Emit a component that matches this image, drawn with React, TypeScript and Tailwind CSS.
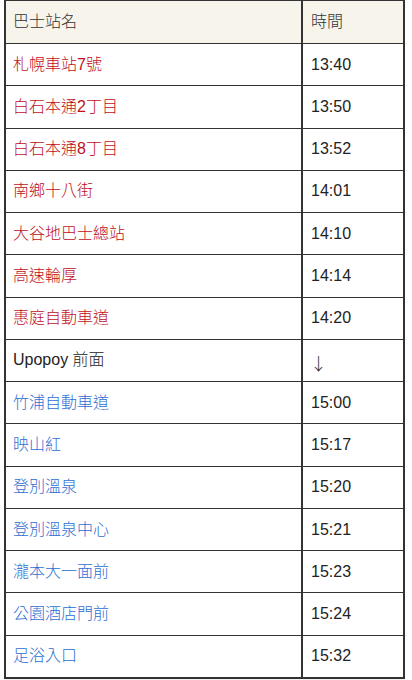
import React from "react";

type Row = { name: string; time: string; color: "red" | "black" | "blue" };

const rows: Row[] = [
  { name: "札幌車站7號", time: "13:40", color: "red" },
  { name: "白石本通2丁目", time: "13:50", color: "red" },
  { name: "白石本通8丁目", time: "13:52", color: "red" },
  { name: "南鄉十八街", time: "14:01", color: "red" },
  { name: "大谷地巴士總站", time: "14:10", color: "red" },
  { name: "高速輪厚", time: "14:14", color: "red" },
  { name: "惠庭自動車道", time: "14:20", color: "red" },
  { name: "Upopoy 前面", time: "↓", color: "black" },
  { name: "竹浦自動車道", time: "15:00", color: "blue" },
  { name: "映山紅", time: "15:17", color: "blue" },
  { name: "登別溫泉", time: "15:20", color: "blue" },
  { name: "登別溫泉中心", time: "15:21", color: "blue" },
  { name: "瀧本大一面前", time: "15:23", color: "blue" },
  { name: "公園酒店門前", time: "15:24", color: "blue" },
  { name: "足浴入口", time: "15:32", color: "blue" },
];

const font = {
  fontFamily: '"Liberation Sans", "Noto Sans CJK TC", sans-serif',
};

export default function App() {
  return (
    <div className="w-[412px] h-[680px] bg-white overflow-hidden" style={font}>
      <div className="ml-[4px] w-[401px] border-t border-l-2 border-r-2 border-b-2 border-[#333333]">
        <div className="flex h-[43px] border-b border-[#333333] bg-[#f7f4ec] text-[16px] text-[#333333]">
          <div className="w-[297px] flex items-center pl-[7px] pb-[1px] border-r-2 border-[#333333] font-light">
            巴士站名
          </div>
          <div className="flex-1 flex items-center pl-[8px] pb-[1px] font-light">時間</div>
        </div>
        {rows.map((r, i) => {
          const last = i === rows.length - 1;
          const c =
            r.color === "red"
              ? "text-[#c00f1a] font-light"
              : r.color === "blue"
              ? "text-[#2d6dd2] font-light"
              : "text-[#222222] font-light";
          return (
            <div
              key={i}
              className={
                last
                  ? "flex h-[41.3px] text-[16px]"
                  : "flex h-[42.27px] border-b border-[#333333] text-[16px]"
              }
            >
              <div
                className={
                  "w-[297px] flex items-center pl-[7px] border-r-2 border-[#333333] " + c
                }
              >
                {r.name}
              </div>
              {r.time === "↓" ? (
                <div className="flex-1 flex items-center pl-[7px] pt-[5px] text-[#333333]">
                  <span className="font-['Noto_Sans_CJK_TC'] text-[17px] font-light">↓</span>
                </div>
              ) : (
                <div className="flex-1 flex items-center pl-[8px] text-[#222222]">
                  {r.time}
                </div>
              )}
            </div>
          );
        })}
      </div>
      <div className="ml-[4px] w-[401px] h-[10px] bg-[#f1f1f1]"></div>
    </div>
  );
}
